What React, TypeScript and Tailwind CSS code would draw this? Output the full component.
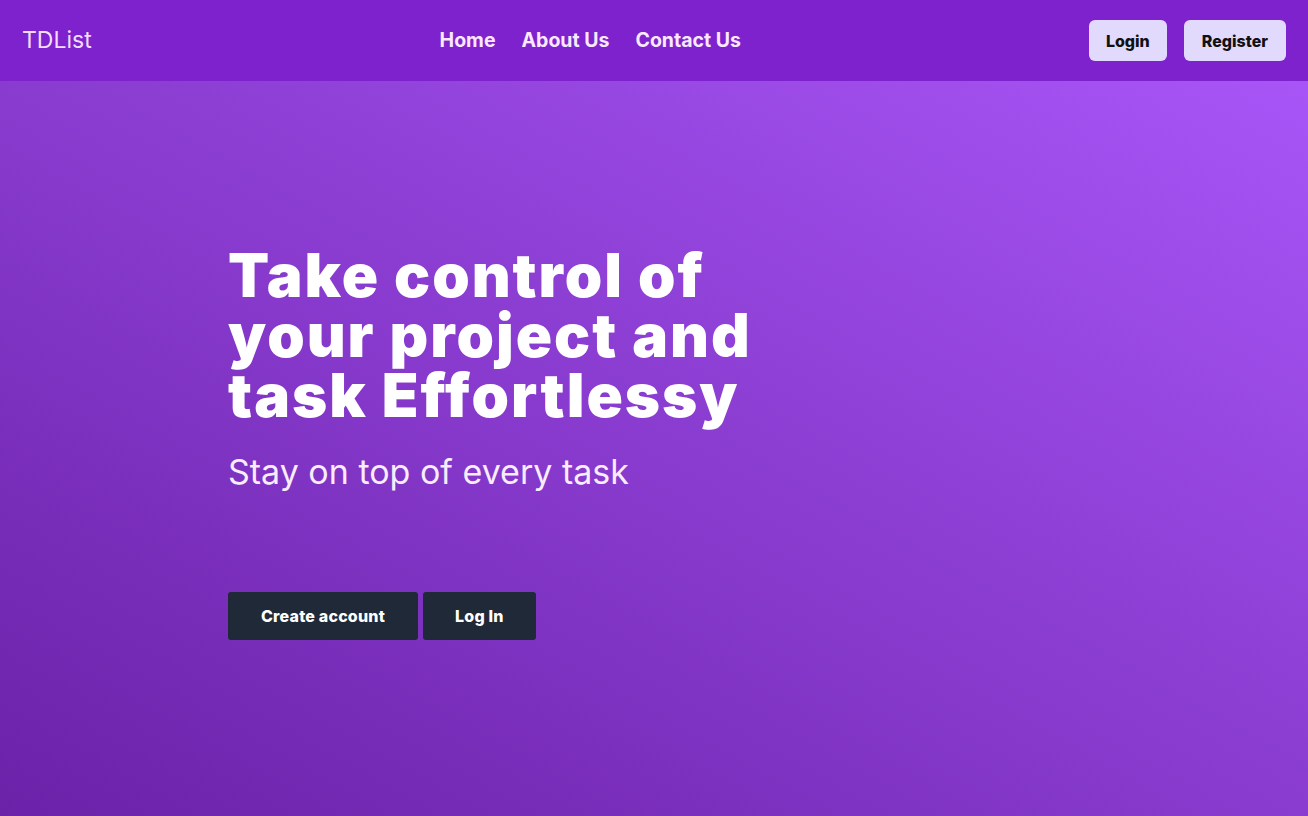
import React from "react";

export default function App() {
  return (
    <div
      className="min-h-screen flex flex-col"
      style={{ fontFamily: "Inter, 'Noto Sans', sans-serif" }}
    >
      <header className="h-[81px] bg-[#7e22ce] flex items-center justify-between px-[22px] shrink-0">
        <div className="text-[23px] text-[#f5dcfd]">TDList</div>
        <nav className="flex items-center gap-[26px] text-[19.5px] font-bold text-[#fae8ff]">
          <a href="#">Home</a>
          <a href="#">About Us</a>
          <a href="#">Contact Us</a>
        </nav>
        <div className="flex items-center gap-[17px]">
          <button className="h-[41px] px-[17px] rounded-md bg-[#e2dafd] text-base font-extrabold text-[#111]">
            Login
          </button>
          <button className="h-[41px] px-[18px] rounded-md bg-[#e2dafd] text-base font-extrabold text-[#111]">
            Register
          </button>
        </div>
      </header>
      <section className="flex-1 bg-linear-to-tr from-[#6b21a8] to-[#a855f7] pl-[228px] pt-[164px]">
        <h1 className="text-[60px] leading-[60px] font-black text-white tracking-[2px]">
          Take control of
          <br />
          your project and
          <br />
          task Effortlessy
        </h1>
        <p className="mt-[27px] text-[34px] leading-10 text-[#f8ecff]">Stay on top of every task</p>
        <div className="mt-[100px] flex gap-[5px]">
          <button className="h-12 px-[33px] rounded-[3px] bg-[#1f2937] text-white text-base font-extrabold tracking-[0.2px]">
            Create account
          </button>
          <button className="h-12 px-8 rounded-[3px] bg-[#1f2937] text-white text-base font-extrabold tracking-[0.2px]">
            Log In
          </button>
        </div>
      </section>
    </div>
  );
}
